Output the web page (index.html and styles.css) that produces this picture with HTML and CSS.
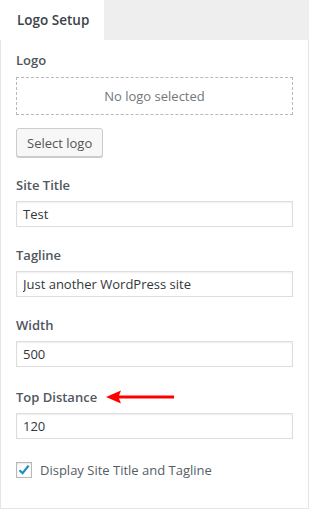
FILE: index.html
```html
<!DOCTYPE html>
<html>
<head>
  <title>Logo Setup</title>
  <link rel="stylesheet" href="styles.css">
</head>
<body>
  <div class="tabs">
    <div class="tab">Logo Setup</div>
  </div>

  <div class="panel">
    <div class="field">
      <div class="label">Logo</div>
      <div class="dropzone">No logo selected</div>
      <button class="button">Select logo</button>
    </div>

    <div class="field">
      <div class="label">Site Title</div>
      <input class="text-input" value="Test">
    </div>

    <div class="field">
      <div class="label">Tagline</div>
      <input class="text-input" value="Just another WordPress site">
    </div>

    <div class="field">
      <div class="label">Width</div>
      <input class="text-input" value="500">
    </div>

    <div class="field field-last">
      <div class="label">
        Top Distance
        <svg class="arrow" viewBox="0 0 68 14">
          <path d="M0 7 L15 0.5 L13 5.5 L68 5.5 L68 8.5 L13 8.5 L15 13.5 Z" fill="#f00"/>
        </svg>
      </div>
      <input class="text-input" value="120">
    </div>

    <label class="check-row">
      <span class="checkbox">
        <svg viewBox="0 0 16 16"><path d="M3.5 8.2 L6.6 11.2 L12.6 3.6" fill="none" stroke="#1e8cbe" stroke-width="2.2"/></svg>
      </span>
      Display Site Title and Tagline
    </label>
  </div>
</body>
</html>
```

FILE: styles.css
```css
body {
  margin: 0;
  font-family: 'Open Sans', 'Noto Sans', Arial, sans-serif;
  font-size: 13px;
  color: #555d66;
  background: #fff;
}

/* Tab bar */
.tabs {
  display: flex;
  height: 40px;
  background: #eeeeee;
  width: 309px;
}

.tab {
  width: 104px;
  box-sizing: border-box;
  padding-left: 17px;
  background: #fff;
  line-height: 40px;
  font-size: 13.5px;
  font-weight: 600;
  color: #3c434a;
}

/* Panel */
.panel {
  width: 309px;
  height: 469px;
  box-sizing: border-box;
  border: 1px solid #e5e5e5;
  border-top: none;
  padding: 10px 15px 0;
}

.field {
  margin-bottom: 18px;
}

.field-last {
  margin-top: 20px;
}

.label {
  display: flex;
  align-items: center;
  line-height: 20px;
  font-weight: 600;
  color: #50575e;
  margin-bottom: 6px;
}

.arrow {
  width: 68px;
  height: 14px;
  margin-left: 9px;
}

.dropzone {
  height: 38px;
  box-sizing: border-box;
  border: 1px dashed #b4b9be;
  display: flex;
  align-items: center;
  justify-content: center;
  color: #72777c;
  margin-top: 7px;
}

.button {
  margin-top: 13px;
  height: 29px;
  padding: 0 10px;
  font-family: inherit;
  font-size: 13px;
  color: #555;
  background: #f7f7f7;
  border: 1px solid #ccc;
  border-radius: 3px;
  box-shadow: 0 1px 0 #ccc;
}

.text-input {
  display: block;
  width: 100%;
  height: 26px;
  box-sizing: border-box;
  padding: 0 6px;
  font-family: inherit;
  font-size: 13px;
  color: #32373c;
  border: 1px solid #ddd;
  box-shadow: inset 0 1px 2px rgba(0,0,0,0.07);
  outline: none;
}

.check-row {
  display: flex;
  align-items: center;
  gap: 8px;
  margin-top: 22px;
  color: #555d66;
}

.checkbox {
  width: 16px;
  height: 16px;
  box-sizing: border-box;
  border: 1px solid #b4b9be;
  background: #fff;
  box-shadow: inset 0 1px 2px rgba(0,0,0,0.1);
  display: flex;
}

.checkbox svg {
  width: 16px;
  height: 16px;
  margin: -1px;
}
```
